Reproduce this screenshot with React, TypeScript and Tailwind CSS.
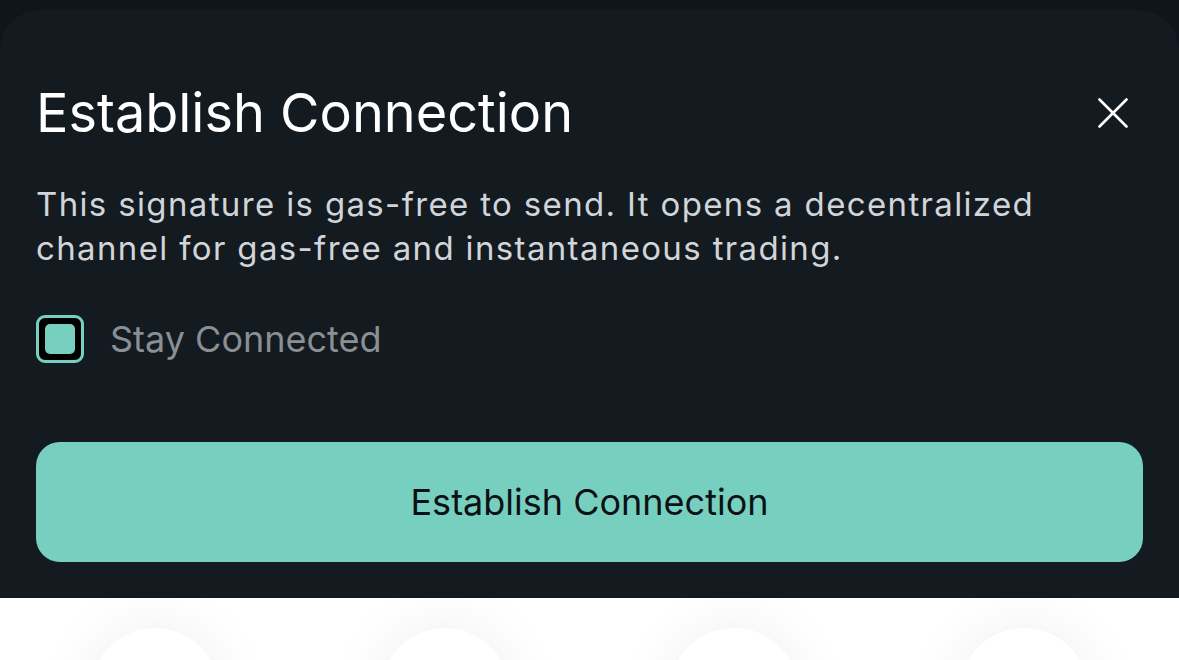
import { useState } from 'react';

export default function App() {
  const [stay, setStay] = useState(true);

  return (
    <div className="h-[660px] overflow-hidden bg-[#10141b] pt-[10px] flex flex-col font-['Inter',sans-serif]">
      {/* Sheet */}
      <div className="h-[588px] shrink-0 rounded-t-[40px] bg-[#131a20] px-9 pt-[71px]">
        <div className="flex items-center justify-between">
          <h1 className="text-[54px] leading-[64px] text-white font-normal">Establish Connection</h1>
          <button className="w-[60px] h-[60px] flex items-center justify-center text-white">
            <svg width="30" height="30" viewBox="0 0 30 30" fill="none" stroke="currentColor" strokeWidth="2.6" strokeLinecap="round">
              <path d="M1.5 1.5L28.5 28.5M28.5 1.5L1.5 28.5" />
            </svg>
          </button>
        </div>

        <p className="mt-[37px] text-[33px] leading-[44px] tracking-[1.35px] text-[#d1d5d9]">
          This signature is gas-free to send. It opens a decentralized channel for gas-free and instantaneous trading.
        </p>

        <label className="mt-[45px] flex items-center gap-[26px] cursor-pointer" onClick={() => setStay(!stay)}>
          <div className="w-12 h-12 rounded-[9px] border-[3px] border-[#77cfc0] bg-black p-[6px]">
            {stay && <div className="w-full h-full rounded-[5px] bg-[#77cfc0]" />}
          </div>
          <span className="text-[36px] leading-[48px] text-[#8a8f94]">Stay Connected</span>
        </label>

        <button className="mt-[79px] w-full h-[120px] rounded-[24px] bg-[#77cfc0] text-[36px] text-[#0c1115]">
          Establish Connection
        </button>
      </div>

      {/* Page underneath */}
      <div className="flex-1 bg-white grid grid-cols-4 px-[10px] pt-[30px]">
        {[0, 1, 2, 3].map((i) => (
          <div key={i} className="flex justify-center">
            <div className="w-[130px] h-[130px] rounded-full bg-white shadow-[0_0_60px_rgba(0,0,0,0.07)]" />
          </div>
        ))}
      </div>
    </div>
  );
}
